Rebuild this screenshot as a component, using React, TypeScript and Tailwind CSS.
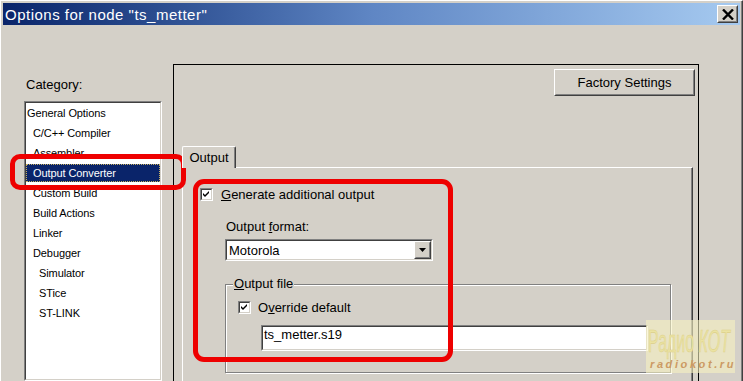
import React from "react";

function Raised({ className = "", children }: { className?: string; children?: React.ReactNode }) {
  return (
    <div className={"border border-t-white border-l-white border-r-[#404040] border-b-[#404040] " + className}>
      <div className="h-full w-full border border-t-[#d4d0c8] border-l-[#d4d0c8] border-r-[#808080] border-b-[#808080] flex items-center justify-center">
        {children}
      </div>
    </div>
  );
}

function Sunken({ className = "", innerClass = "", children }: { className?: string; innerClass?: string; children?: React.ReactNode }) {
  return (
    <div className={"border border-t-[#808080] border-l-[#808080] border-r-white border-b-white " + className}>
      <div className={"h-full w-full border border-t-[#404040] border-l-[#404040] border-r-[#d4d0c8] border-b-[#d4d0c8] bg-white " + innerClass}>
        {children}
      </div>
    </div>
  );
}

function Check() {
  return (
    <Sunken className="w-[13px] h-[13px] shrink-0" innerClass="flex items-center justify-center">
      <svg width="9" height="9" viewBox="0 0 9 9">
        <path d="M1 3 L3 5 L7 1 L7 3 L3 7 L1 5 Z" fill="#000" />
      </svg>
    </Sunken>
  );
}

const items: { label: string; indent: number; selected?: boolean }[] = [
  { label: "General Options", indent: 1 },
  { label: "C/C++ Compiler", indent: 7 },
  { label: "Assembler", indent: 7 },
  { label: "Output Converter", indent: 7, selected: true },
  { label: "Custom Build", indent: 7 },
  { label: "Build Actions", indent: 7 },
  { label: "Linker", indent: 7 },
  { label: "Debugger", indent: 7 },
  { label: "Simulator", indent: 13 },
  { label: "STice", indent: 13 },
  { label: "ST-LINK", indent: 13 },
];

export default function App() {
  return (
    <div className="relative w-[743px] h-[381px] overflow-hidden bg-[#d4d0c8] text-black font-['Liberation_Sans',Arial,sans-serif] border-t border-l border-t-white border-l-white border-r border-r-[#404040]">
      <div className="h-full flex flex-col border-r border-r-[#808080] pt-[2px] pl-[2px] pr-[1px]">
        {/* Title bar */}
        <div className="h-[22px] shrink-0 flex items-center justify-between bg-linear-to-r from-[#0a246a] via-[#5f86c4] to-[#a6caf0] pl-[2px] pr-[2px]">
          <span className="text-white text-[15px] leading-none tracking-[0.5px] whitespace-nowrap">Options for node "ts_metter"</span>
          <Raised className="w-[21px] h-[18px] bg-[#d4d0c8]">
            <svg width="12" height="11" viewBox="0 0 12 11">
              <path d="M1 0.5 L11 10.5 M11 0.5 L1 10.5" stroke="#000" strokeWidth="2.4" />
            </svg>
          </Raised>
        </div>

        {/* Body */}
        <div className="flex flex-1 min-h-0">
          {/* Left column */}
          <div className="w-[170px] shrink-0 pl-[21px] flex flex-col">
            <div className="mt-[52px] pl-[2px] text-[13px] leading-[16px]">Category:</div>
            <Sunken className="mt-[8px] w-[138px] h-[300px]">
              {items.map((it) => (
                <div key={it.label} className="h-[20px] flex items-center text-[11px] tracking-[-0.1px] whitespace-nowrap">
                  {it.selected ? (
                    <div className="h-[18px] w-full bg-[#0a246a] text-white flex items-center border border-dotted border-[#c8b060]" style={{ paddingLeft: it.indent - 1 }}>
                      {it.label}
                    </div>
                  ) : (
                    <span style={{ paddingLeft: it.indent }}>{it.label}</span>
                  )}
                </div>
              ))}
            </Sunken>
          </div>

          {/* Right panel */}
          <div className="w-[526px] shrink-0 mt-[39px] border-l border-t border-r border-black flex flex-col">
            <Raised className="self-end mt-[4px] mr-[3px] w-[141px] h-[27px]">
              <span className="text-[13px] leading-none">Factory Settings</span>
            </Raised>

            <div className="ml-[8px] mt-[50px] relative z-10 -mb-px w-[54px] h-[22px] bg-[#d4d0c8] border-t border-l border-r border-t-white border-l-white border-r-[#404040] rounded-t-[2px] flex items-center justify-center shadow-[inset_-1px_0_0_#808080]">
              <span className="text-[13px] leading-none">Output</span>
            </div>

            <div className="ml-[8px] mr-[5px] flex-1 border-t border-l border-t-white border-l-white border-r border-r-[#404040] shadow-[inset_-1px_0_0_#808080] flex flex-col">
              <div className="mt-[20px] ml-[17px] h-[13px] flex items-center">
                <Check />
                <span className="ml-[8px] text-[13px] leading-[16px] whitespace-nowrap">
                  <span className="underline">G</span>enerate additional output
                </span>
              </div>

              <div className="ml-[42px] mt-[18px] flex flex-col">
                <div className="text-[13px] leading-[16px] pl-[1px]">
                  Output <span className="underline">f</span>ormat:
                </div>
                <Sunken className="mt-[4px] w-[208px] h-[22px]" innerClass="flex items-center justify-between pl-[2px]">
                  <span className="text-[13px] leading-none">Motorola</span>
                  <Raised className="w-[17px] h-[18px] bg-[#d4d0c8]">
                    <svg width="7" height="4" viewBox="0 0 7 4">
                      <path d="M0 0 H7 L3.5 4 Z" fill="#000" />
                    </svg>
                  </Raised>
                </Sunken>

                <div className="relative mt-[23px] w-[446px] h-[89px] border border-[#808080] shadow-[inset_1px_1px_0_#fff,1px_1px_0_#fff] pl-[12px] pt-[16px] flex flex-col">
                  <span className="absolute -top-[9px] left-[7px] px-[1px] bg-[#d4d0c8] text-[13px] leading-[16px] whitespace-nowrap">
                    <span className="underline">O</span>utput file
                  </span>
                  <div className="h-[13px] flex items-center">
                    <Check />
                    <span className="ml-[7px] text-[13px] leading-[16px] whitespace-nowrap">
                      O<span className="underline">v</span>erride default
                    </span>
                  </div>
                  <Sunken className="mt-[11px] ml-[23px] w-[387px] h-[26px]" innerClass="text-[13px] leading-[16px] pl-[1px]">
                    ts_metter.s19
                  </Sunken>
                </div>
              </div>
            </div>
          </div>
        </div>
      </div>

      {/* Red annotation rectangles */}
      <div className="absolute left-[9px] top-[153px] w-[176px] h-[36px] border-[5px] border-[#ee0000] rounded-[10px] pointer-events-none" />
      <div className="absolute left-[192px] top-[178px] w-[260px] h-[183px] border-[5px] border-[#ee0000] rounded-[11px] pointer-events-none" />

      {/* Watermark logo */}
      <svg className="absolute left-[645px] top-[319px]" width="89" height="53" viewBox="0 0 89 53">
        <rect x="0" y="0" width="89" height="53" fill="#f6f1c2" fillOpacity="0.6" />
        <g transform="scale(1,2)">
          <text x="2" y="16" fontSize="16" fontFamily="Liberation Sans, Arial, sans-serif" fill="#ebe3a2" stroke="#ddd08a" strokeWidth="0.3">
            Радио <tspan fontStyle="italic">КОТ</tspan>
          </text>
        </g>
        <text x="4" y="48" fontSize="11" fontStyle="italic" fontWeight="bold" fontFamily="Liberation Sans, Arial, sans-serif" fill="#cc9a63" letterSpacing="2.6">
          radiokot.ru
        </text>
      </svg>
    </div>
  );
}
